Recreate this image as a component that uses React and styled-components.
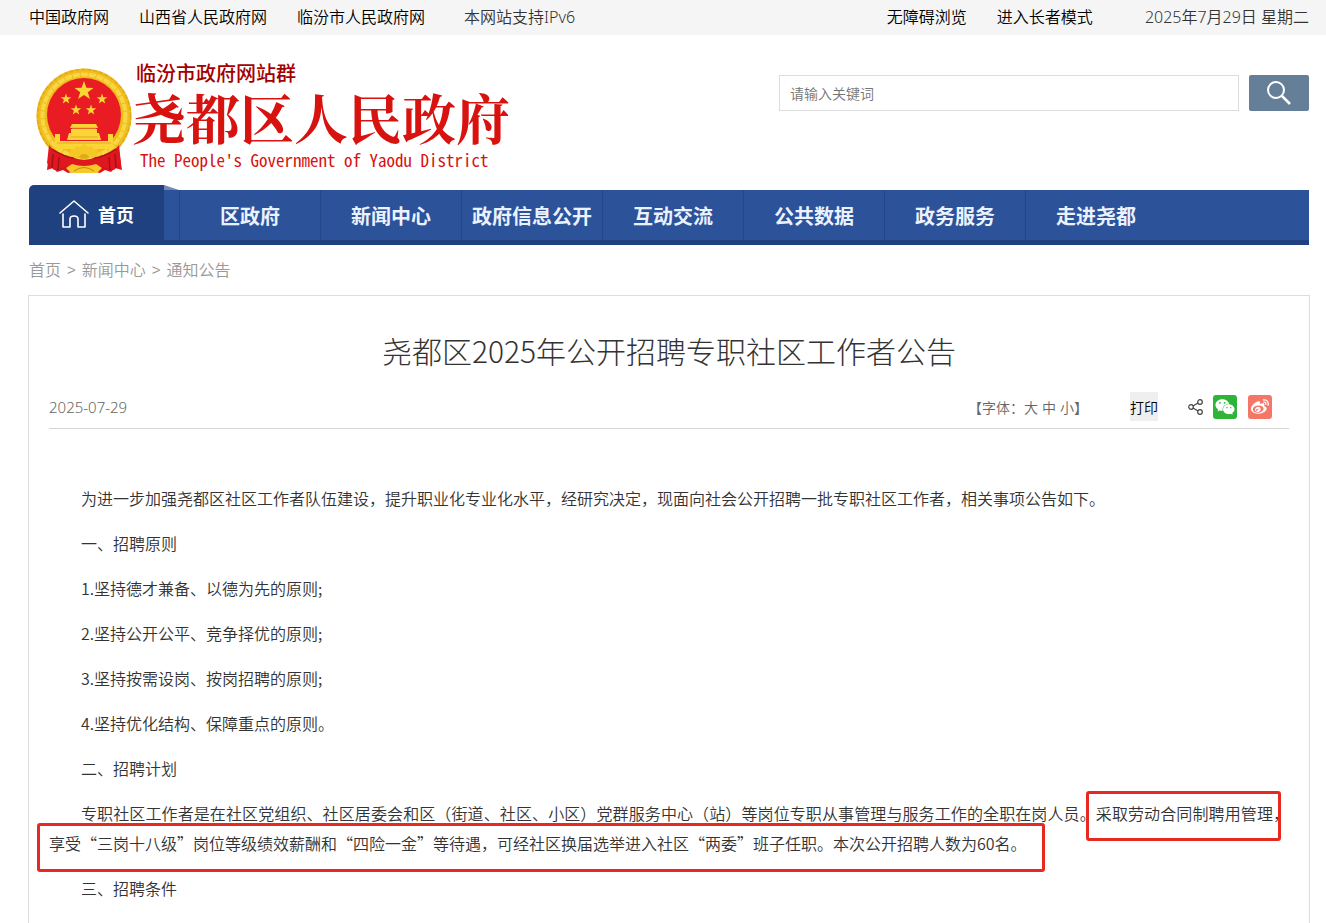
import React from 'react'
import styled, { createGlobalStyle } from 'styled-components'
import { FaWeixin, FaWeibo } from 'react-icons/fa'

const GlobalStyle = createGlobalStyle`
  * {
    box-sizing: border-box;
  }
  body {
    margin: 0;
    background: #fff;
    color: #333;
    font-family: "Noto Sans CJK SC", "Noto Sans", sans-serif;
    font-size: 16px;
    font-weight: 350;
  }
  a {
    color: inherit;
    text-decoration: none;
  }
  button, input {
    font-family: inherit;
    font-weight: inherit;
  }
`

const Page = styled.div`
  display: flex;
  flex-direction: column;
  min-height: 100vh;
`

const TopBar = styled.div`
  display: flex;
  justify-content: space-between;
  height: 35px;
  padding: 0 17px 0 29px;
  line-height: 33px;
  white-space: nowrap;
  background: #f5f5f5;
`

const TopGroup = styled.div`
  display: flex;
  gap: 30px;
`

const TopLink = styled.a`
  color: #000;
`

const TopText = styled.span`
  margin-left: ${(props) => props.$space};
  font-family: "Noto Sans", "Noto Sans CJK SC", sans-serif;
  line-height: 35px;
  color: #333;
`

const Header = styled.header`
  display: flex;
  justify-content: space-between;
  align-items: flex-start;
  height: 150px;
  padding: 0 17px 0 36px;
`

const Brand = styled.a`
  display: flex;
  margin-top: 26px;
  white-space: nowrap;
`

const Emblem = styled.svg`
  width: 96px;
  height: 108px;
  margin-top: 6px;
`

const BrandText = styled.div`
  display: flex;
  flex-direction: column;
  color: #d7120f;
`

const SiteGroup = styled.span`
  padding-left: 4px;
  font-size: 20px;
  line-height: 24px;
  font-weight: 500;
  color: #a40000;
`

const SiteName = styled.span`
  font-family: "Noto Serif CJK SC", "Noto Sans CJK SC", serif;
  font-size: 54px;
  line-height: 64px;
  font-weight: 700;
`

const SiteEnglish = styled.span`
  padding-left: 8px;
  font-family: "Noto Sans Mono CJK SC", "Liberation Mono", monospace;
  font-size: 17px;
  line-height: 22px;
  font-weight: 500;
`

const Search = styled.form`
  display: flex;
  flex: 0 1 530px;
  gap: 10px;
  margin-top: 40px;
`

const SearchInput = styled.input`
  flex: 1;
  min-width: 0;
  height: 36px;
  padding: 0 10px;
  border: 1px solid #ddd;
  font-size: 14px;
  &::placeholder {
    color: #757575;
  }
`

const SearchButton = styled.button`
  display: flex;
  justify-content: center;
  align-items: center;
  width: 60px;
  height: 36px;
  padding: 0;
  border: 0;
  border-radius: 2px;
  background: #667f99;
`

const Nav = styled.nav`
  display: flex;
  align-items: flex-end;
  height: 60px;
  margin: 0 17px 0 29px;
`

const HomeTab = styled.a`
  display: flex;
  align-items: center;
  gap: 8px;
  width: 135px;
  height: 60px;
  padding: 0 0 3px 29px;
  border-radius: 5px 0 0 0;
  background: #1f4180;
  color: #fff;
  font-size: 18px;
  font-weight: 700;
`

const Fold = styled.svg`
  width: 15px;
  height: 60px;
`

const NavList = styled.div`
  display: flex;
  flex: 1;
  height: 55px;
  border-bottom: 5px solid #1f4180;
  background: #2c5299;
`

const NavItem = styled.a`
  width: 141px;
  border-left: 1px solid #234788;
  color: #eaf1ff;
  font-size: 20px;
  line-height: 52px;
  font-weight: 700;
  text-align: center;
  white-space: nowrap;
`

const Breadcrumb = styled.div`
  display: flex;
  gap: 6px;
  height: 50px;
  padding-left: 29px;
  line-height: 48px;
  color: #999;
`

const Arrow = styled.span`
  font-family: "Liberation Sans", sans-serif;
  font-size: 15px;
  line-height: 50px;
`

const Panel = styled.main`
  flex: 1;
  margin: 0 16px 0 28px;
  padding: 0 20px;
  border: 1px solid #ddd;
  border-bottom: 0;
`

const Title = styled.h1`
  margin: 32px 0 0;
  font-size: 30px;
  line-height: 44px;
  font-weight: 300;
  text-align: center;
`

const Meta = styled.div`
  display: flex;
  justify-content: space-between;
  align-items: center;
  height: 44px;
  margin-top: 13px;
  padding-right: 17px;
  border-bottom: 1px solid #d5d5d5;
  color: #666;
  font-size: 14px;
`

const PublishDate = styled.time`
  font-family: "Noto Sans", sans-serif;
  font-size: 15px;
`

const Tools = styled.div`
  display: flex;
  align-items: center;
`

const FontSizes = styled.div`
  display: flex;
  gap: 4px;
`

const PlainButton = styled.button`
  padding: 0;
  border: 0;
  background: none;
  color: inherit;
  font-size: 14px;
`

const PrintButton = styled(PlainButton)`
  height: 29px;
  margin: 0 30px 0 42px;
  background: #efefef;
  color: #000;
`

const Share = styled.div`
  display: flex;
  align-items: center;
  gap: 10px;
`

const ShareLink = styled.a`
  display: flex;
  justify-content: center;
  align-items: center;
  width: 24px;
  height: 24px;
  border-radius: 3px;
  background: ${(props) => props.$color};
  color: #fff;
  & + & {
    margin-left: 1px;
  }
`

const Article = styled.article`
  padding-top: 54px;
  line-height: 30px;
`

const Paragraph = styled.p`
  position: relative;
  margin: 0 0 15px;
  text-indent: 2em;
  text-align: justify;
`

const Mark = styled.span`
  position: absolute;
  border: 3px solid #e8291f;
  border-radius: 3px;
  pointer-events: none;
`

const LineEndMark = styled(Mark)`
  top: -7px;
  right: 8px;
  width: 195px;
  height: 50px;
`

const SecondLineMark = styled(Mark)`
  top: 25px;
  left: -12px;
  width: 1008px;
  height: 49px;
`

const navItems = ['区政府', '新闻中心', '政府信息公开', '互动交流', '公共数据', '政务服务', '走进尧都']

const star = 'M0 -10L2.4 -3.2L9.5 -3.1L3.8 1.2L5.9 8.1L0 4L-5.9 8.1L-3.8 1.2L-9.5 -3.1L-2.4 -3.2Z'

const NationalEmblem = () => (
  <Emblem viewBox="0 0 96 108" aria-hidden="true">
    <path d="M14 78L11 103L17 101L21 105L27 103L32 106L48 102L64 106L69 103L75 105L79 101L86 103L82 78Z" fill="#d9141c" />
    <circle cx="48" cy="49" r="47.5" fill="#f0bd1c" />
    <circle cx="48" cy="49" r="46.5" fill="none" stroke="#e2aa18" strokeWidth="1.5" strokeDasharray="4 2" />
    <circle cx="48" cy="49" r="41.5" fill="none" stroke="#f8d645" strokeWidth="4" strokeDasharray="7 1" />
    <circle cx="48" cy="48" r="37" fill="#e91c23" />
    <g fill="#fbd436">
      <path d={star} transform="translate(48 24)" />
      <path d={star} transform="translate(30 32) scale(.55)" />
      <path d={star} transform="translate(66 32) scale(.55)" />
      <path d={star} transform="translate(40 43) scale(.55)" />
      <path d={star} transform="translate(55 43) scale(.55)" />
      <path d="M36 57H60L62 61H34ZM35 62H61V66H35ZM33 66H63L65 73H31ZM19 67H24V74H72V67H77V82H19Z" />
    </g>
    <path d="M21 76H75M34 70H62M36 61H60" stroke="#e5ad20" />
    <path d="M13 78Q18 86 36 90Q48 96 60 90Q78 86 83 78L85 96L78 103L64 99L48 102L32 99L18 103L11 96Z" fill="#df1820" />
    <path d="M16 82Q28 90 38 91M80 82Q68 90 58 91" fill="none" stroke="#a90d16" strokeWidth="1.5" />
    <path d="M32 89L35 85L34 82L39 82L40 79L44 80L48 77L52 80L56 79L57 82L62 82L61 85L64 89L56 91Q48 83 40 91Z" fill="#f5c826" />
    <path d="M42 90Q48 84 54 90Q48 94 42 90Z" fill="#e0a91a" />
    <path d="M30 101L36 97Q48 101 60 97L66 101L61 106H35Z" fill="#f4c928" />
    <path d="M17 87L16 101M23 90L22 103M73 90L74 103M79 87L80 101" stroke="#a90d16" strokeWidth="1.5" />
    <path d="M38 104Q48 97 58 104" fill="none" stroke="#c98a12" />
  </Emblem>
)

const App = () => {
  return (
    <Page>
      <GlobalStyle />
      <TopBar>
        <TopGroup>
          <TopLink href="#">中国政府网</TopLink>
          <TopLink href="#">山西省人民政府网</TopLink>
          <TopLink href="#">临汾市人民政府网</TopLink>
          <TopText $space="9px">本网站支持IPv6</TopText>
        </TopGroup>
        <TopGroup>
          <TopLink href="#">无障碍浏览</TopLink>
          <TopLink href="#">进入长者模式</TopLink>
          <TopText $space="22px">2025年7月29日 星期二</TopText>
        </TopGroup>
      </TopBar>

      <Header>
        <Brand href="#">
          <NationalEmblem />
          <BrandText>
            <SiteGroup>临汾市政府网站群</SiteGroup>
            <SiteName>尧都区人民政府</SiteName>
            <SiteEnglish>The People's Government of Yaodu District</SiteEnglish>
          </BrandText>
        </Brand>
        <Search onSubmit={(e) => e.preventDefault()}>
          <SearchInput type="text" placeholder="请输入关键词" aria-label="请输入关键词" />
          <SearchButton aria-label="搜索">
            <svg width="26" height="26" viewBox="0 0 26 26" fill="none" stroke="#fff">
              <circle cx="10" cy="10" r="8" strokeWidth="2" />
              <path d="M16 16L24 24" strokeWidth="2.5" />
            </svg>
          </SearchButton>
        </Search>
      </Header>

      <Nav>
        <HomeTab href="#">
          <svg width="32" height="30" viewBox="0 0 32 30" fill="none" stroke="#fff" strokeWidth="1.6" strokeLinejoin="round" strokeLinecap="round">
            <path d="M2 14L16 2L30 14" />
            <path d="M5 15V28H12V20Q12 17 16 17Q20 17 20 20V28H27V15" />
          </svg>
          首页
        </HomeTab>
        <Fold viewBox="0 0 15 60" aria-hidden="true">
          <path d="M0 0L15 5H0Z" fill="#7389b4" />
          <path d="M0 5H15V55H0Z" fill="#2c5299" />
          <path d="M0 55H15V60H0Z" fill="#1f4180" />
        </Fold>
        <NavList>
          {navItems.map((item) => (
            <NavItem href="#" key={item}>{item}</NavItem>
          ))}
        </NavList>
      </Nav>

      <Breadcrumb>
        <a href="#">首页</a>
        <Arrow>&gt;</Arrow>
        <a href="#">新闻中心</a>
        <Arrow>&gt;</Arrow>
        <a href="#">通知公告</a>
      </Breadcrumb>

      <Panel>
        <Title>尧都区2025年公开招聘专职社区工作者公告</Title>
        <Meta>
          <PublishDate>2025-07-29</PublishDate>
          <Tools>
            <FontSizes>
              <span>【字体：<PlainButton>大</PlainButton></span>
              <PlainButton>中</PlainButton>
              <span><PlainButton>小</PlainButton>】</span>
            </FontSizes>
            <PrintButton>打印</PrintButton>
            <Share>
              <svg width="15" height="16" viewBox="0 0 15 16" fill="none" stroke="#444" strokeWidth="1.2">
                <circle cx="3" cy="8" r="2.3" />
                <circle cx="12" cy="3" r="2.3" />
                <circle cx="12" cy="13" r="2.3" />
                <path d="M5 7L10 4M5 9L10 12" />
              </svg>
              <ShareLink href="#" $color="#2fb43a" aria-label="微信"><FaWeixin size={20} /></ShareLink>
              <ShareLink href="#" $color="#f57566" aria-label="微博"><FaWeibo size={18} /></ShareLink>
            </Share>
          </Tools>
        </Meta>

        <Article>
          <Paragraph>为进一步加强尧都区社区工作者队伍建设，提升职业化专业化水平，经研究决定，现面向社会公开招聘一批专职社区工作者，相关事项公告如下。</Paragraph>
          <Paragraph>一、招聘原则</Paragraph>
          <Paragraph>1.坚持德才兼备、以德为先的原则;</Paragraph>
          <Paragraph>2.坚持公开公平、竞争择优的原则;</Paragraph>
          <Paragraph>3.坚持按需设岗、按岗招聘的原则;</Paragraph>
          <Paragraph>4.坚持优化结构、保障重点的原则。</Paragraph>
          <Paragraph>二、招聘计划</Paragraph>
          <Paragraph>
            专职社区工作者是在社区党组织、社区居委会和区（街道、社区、小区）党群服务中心（站）等岗位专职从事管理与服务工作的全职在岗人员。采取劳动合同制聘用管理，享受“三岗十八级”岗位等级绩效薪酬和“四险一金”等待遇，可经社区换届选举进入社区“两委”班子任职。本次公开招聘人数为60名。
            <LineEndMark />
            <SecondLineMark />
          </Paragraph>
          <Paragraph>三、招聘条件</Paragraph>
        </Article>
      </Panel>
    </Page>
  )
}

export default App
